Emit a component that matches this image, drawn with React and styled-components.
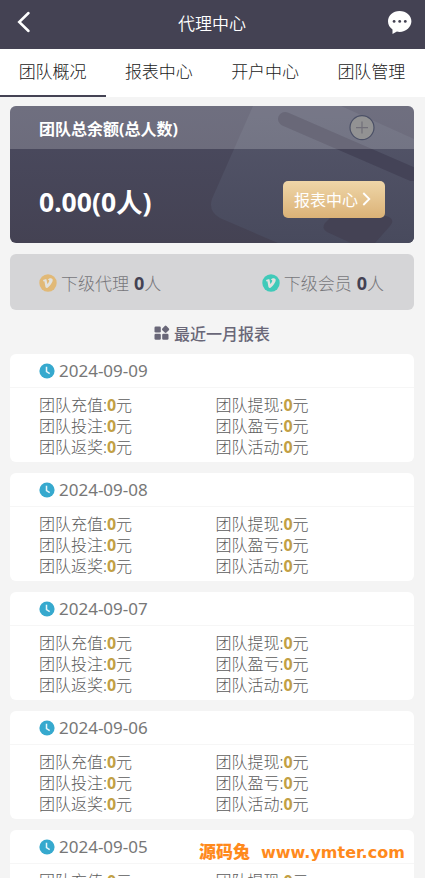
import React from "react";
import styled, { createGlobalStyle } from "styled-components";

const GlobalStyle = createGlobalStyle`
  * {
    box-sizing: border-box;
  }

  body {
    margin: 0;
    height: 878px;
    overflow: hidden;
    background: #f4f4f4;
    font-family: "Noto Sans", "Noto Sans CJK SC", sans-serif;
    font-size: 16px;
    color: #777;
  }
`;

const Page = styled.div`
  position: relative;
  height: 878px;
  overflow: hidden;
`;

const Header = styled.header`
  display: flex;
  align-items: center;
  justify-content: space-between;
  height: 49px;
  padding: 0 13px 5px 16px;
  background: #444253;
`;

const Title = styled.h1`
  margin: 4px 0 0 5px;
  font-size: 17px;
  font-weight: 350;
  line-height: 24px;
  color: #fff;
`;

const Tabs = styled.nav`
  display: grid;
  grid-template-columns: repeat(4, 1fr);
  height: 48px;
  background: #fff;
`;

const Tab = styled.div`
  padding-right: 1px;
  font-size: 17px;
  font-weight: 300;
  line-height: 46px;
  text-align: center;
  color: #222;
  border-bottom: 2px solid ${props => (props.$active ? "#444253" : "transparent")};
`;

const Content = styled.main`
  width: 404px;
  margin: 9px 0 0 10px;
`;

const Balance = styled.section`
  position: relative;
  height: 137px;
  border-radius: 6px;
  overflow: hidden;
  background: linear-gradient(#4b4b60, #444253);
  color: #fff;
`;

const Backdrop = styled.svg`
  position: absolute;
  top: 0;
  left: 0;
`;

const BalanceHead = styled.div`
  position: relative;
  display: flex;
  align-items: center;
  justify-content: space-between;
  height: 43px;
  padding: 0 39px 0 29px;
  background: rgba(255, 255, 255, 0.2);
  font-weight: 700;
`;

const BalanceBody = styled.div`
  position: relative;
  display: flex;
  align-items: flex-start;
  justify-content: space-between;
  padding: 32px 29px 0;
`;

const Amount = styled.div`
  margin-top: 2px;
  font-size: 26.5px;
  font-weight: 700;
  line-height: 38px;
`;

const ReportButton = styled.button`
  display: flex;
  align-items: center;
  gap: 4px;
  width: 102px;
  height: 37px;
  padding: 0 0 1px 11px;
  border: 0;
  border-radius: 5px;
  background: linear-gradient(#efd6a8, #dbb277);
  font: inherit;
  color: #fff;
`;

const Members = styled.section`
  display: flex;
  justify-content: space-between;
  height: 56px;
  margin-top: 11px;
  padding: 1px 30px 0 29px;
  border-radius: 6px;
  background: #d5d5d7;
  font-size: 17px;
  font-weight: 300;
  color: #77777b;
`;

const Member = styled.div`
  display: flex;
  align-items: center;

  svg {
    margin-right: 4px;
  }

  b {
    margin-left: 5px;
    font-size: 18px;
    font-weight: 700;
    color: #444253;
  }
`;

const SectionTitle = styled.h2`
  display: flex;
  align-items: center;
  justify-content: center;
  gap: 4px;
  height: 44px;
  margin: 0;
  padding: 2px 0 0 0;
  font-size: 16px;
  font-weight: 500;
  color: #696778;
`;

const Report = styled.article`
  height: 108px;
  margin-bottom: 11px;
  border-radius: 6px;
  background: #fff;
`;

const ReportDate = styled.div`
  display: flex;
  align-items: center;
  gap: 4px;
  height: 34px;
  padding-left: 29px;
  border-bottom: 1px solid #f6f6f6;
  font-size: 17px;
`;

const ReportGrid = styled.div`
  display: grid;
  grid-template-columns: 176.5px 1fr;
  grid-auto-rows: 21px;
  padding: 7px 0 0 29px;
  line-height: 21px;
  font-weight: 300;
  color: #5c5c5c;

  b {
    font-weight: 700;
    color: #c2a044;
  }
`;

const Watermark = styled.div`
  position: absolute;
  left: 199px;
  top: 839px;
  display: flex;
  gap: 11px;
  font: 900 17px/24px "Noto Sans CJK SC", sans-serif;
  color: #ff8a1c;
  white-space: nowrap;
`;

const Site = styled.span`
  padding-top: 2px;
  font-family: "DejaVu Sans", sans-serif;
  font-size: 16px;
  font-weight: 700;
`;

const BackIcon = () => (
  <svg width="16" height="22" viewBox="0 0 16 22" fill="none" stroke="#fff" strokeWidth="2.5" strokeLinecap="round">
    <path d="M12.5 2L3.2 11l9.3 9" />
  </svg>
);

const ChatIcon = () => (
  <svg width="25" height="25" viewBox="0 0 25 25">
    <path d="M12.5 1C6 1 1 5.5 1 11.3c0 3.4 1.7 6.3 4.5 8.1v4.6l4.4-2.4c.9.2 1.6.3 2.6.3C19.2 21.9 24.4 17 24.4 11.3S19.2 1 12.5 1z" fill="#fff" />
    <circle cx="7.1" cy="11.4" r="1.4" fill="#444253" />
    <circle cx="12.7" cy="11.4" r="1.4" fill="#444253" />
    <circle cx="18.3" cy="11.4" r="1.4" fill="#444253" />
  </svg>
);

const PlusIcon = () => (
  <svg width="26" height="26" viewBox="0 0 26 26">
    <circle cx="13" cy="12.6" r="12" fill="#929293" stroke="#4b5066" strokeWidth="1.2" />
    <path d="M7 12.6h12M13 6.6v12" stroke="#716f79" strokeWidth="1.2" />
  </svg>
);

const ArrowIcon = () => (
  <svg width="9" height="14" viewBox="0 0 9 14" fill="none" stroke="#fff" strokeWidth="1.8">
    <path d="M1.3 1l6 6-6 6" />
  </svg>
);

const VIcon = ({ color }) => (
  <svg width="18" height="18" viewBox="0 0 18 18">
    <circle cx="9" cy="9" r="8.7" fill={color} />
    <path d="M4 5.9l3.2-.8c.9 1.8.7 4 1.2 5 .8-.8 2.1-2.7 1.8-3.6-.2-.5-.8-.5-1.3-.3.4-1.5 1.9-2.1 3.6-1.8 3.3.8-.7 7-4 9.3-.9.6-1.9.2-2.1-.9L5.4 7.3l-.9.2z" fill="#e2e2df" />
  </svg>
);

const GridIcon = () => (
  <svg width="16" height="16" viewBox="0 0 16 16" fill="#696778">
    <rect x="0.5" y="1.5" width="6.3" height="6" rx="1.3" />
    <rect x="0.5" y="8.7" width="6.3" height="6" rx="1.3" />
    <rect x="8.2" y="8.7" width="6.3" height="6" rx="1.3" />
    <rect x="8.7" y="1.4" width="5.8" height="5.8" rx="1.2" transform="rotate(45 11.6 4.3)" />
  </svg>
);

const ClockIcon = () => (
  <svg width="16" height="16" viewBox="0 0 16 16">
    <circle cx="8" cy="8" r="7.6" fill="#36a9ce" />
    <path d="M7.5 3.8v4.8l3.2 2" fill="none" stroke="#e9f7fb" strokeWidth="1.5" />
  </svg>
);

const WalletBackdrop = () => (
  <Backdrop width="404" height="137" viewBox="0 0 404 137">
    <defs>
      <linearGradient id="wallet" x1="0" y1="0" x2="0" y2="1">
        <stop offset="0" stopColor="#55566a" />
        <stop offset="1" stopColor="#484a5d" />
      </linearGradient>
    </defs>
    <path d="M243 0L202 93Q198 105 210 112L268 137H404V33L331 0z" fill="url(#wallet)" />
    <path d="M275 13L402 68" stroke="#444357" strokeWidth="14" strokeLinecap="round" />
    <path d="M322 110h54q10 3 4 10l-15 17h-24l-24-11q-6-4-2-9z" fill="#444254" />
  </Backdrop>
);

const tabs = ["团队概况", "报表中心", "开户中心", "团队管理"];
const dates = ["2024-09-09", "2024-09-08", "2024-09-07", "2024-09-06", "2024-09-05"];
const fields = ["团队充值", "团队提现", "团队投注", "团队盈亏", "团队返奖", "团队活动"];

export default function App() {
  return (
    <Page>
      <GlobalStyle />
      <Header>
        <BackIcon />
        <Title>代理中心</Title>
        <ChatIcon />
      </Header>
      <Tabs>
        {tabs.map((tab, i) => (
          <Tab key={tab} $active={i === 0}>{tab}</Tab>
        ))}
      </Tabs>
      <Content>
        <Balance>
          <WalletBackdrop />
          <BalanceHead>
            团队总余额(总人数)
            <PlusIcon />
          </BalanceHead>
          <BalanceBody>
            <Amount>0.00(0人)</Amount>
            <ReportButton>
              报表中心
              <ArrowIcon />
            </ReportButton>
          </BalanceBody>
        </Balance>
        <Members>
          <Member>
            <VIcon color="#e1b977" />
            下级代理<b>0</b>人
          </Member>
          <Member>
            <VIcon color="#40cab9" />
            下级会员<b>0</b>人
          </Member>
        </Members>
        <SectionTitle>
          <GridIcon />
          最近一月报表
        </SectionTitle>
        {dates.map(date => (
          <Report key={date}>
            <ReportDate>
              <ClockIcon />
              {date}
            </ReportDate>
            <ReportGrid>
              {fields.map(field => (
                <div key={field}>
                  {field}:<b>0</b>元
                </div>
              ))}
            </ReportGrid>
          </Report>
        ))}
      </Content>
      <Watermark>
        源码兔
        <Site>www.ymter.com</Site>
      </Watermark>
    </Page>
  );
}
